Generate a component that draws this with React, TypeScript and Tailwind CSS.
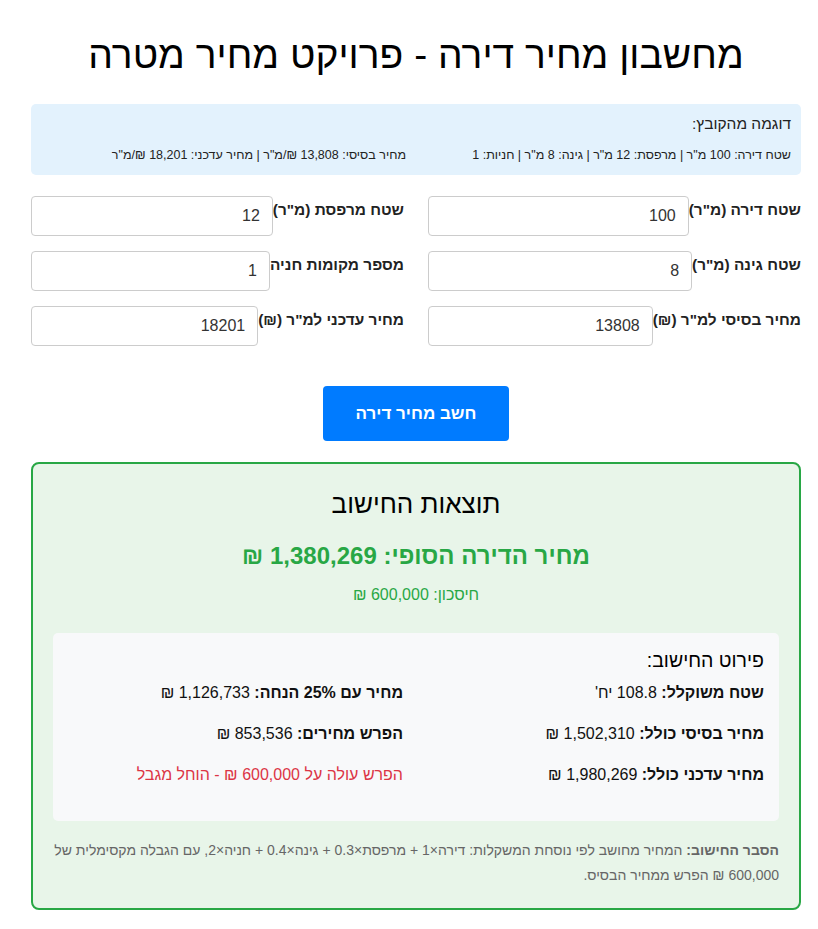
import React from "react";

const font = { fontFamily: '"Liberation Sans", Arial, sans-serif' };

function Field({ label, value }: { label: string; value: string }) {
  return (
    <div className="flex items-start">
      <label className="text-[15.4px] font-bold text-[#222] leading-[18px] pt-[5px] whitespace-nowrap">{label}</label>
      <input
        type="text"
        defaultValue={value}
        dir="rtl"
        className="flex-1 min-w-0 h-[40px] border border-[#ccc] rounded-[4px] bg-white px-[12px] text-[16px] text-[#333] text-right outline-none"
        style={font}
      />
    </div>
  );
}

function Item({ label, value, className = "" }: { label?: string; value: string; className?: string }) {
  return (
    <div className={`text-[16px] leading-[18px] text-[#111] ${className}`}>
      {label && <strong className="font-bold">{label} </strong>}
      {value}
    </div>
  );
}

export default function App() {
  return (
    <div dir="rtl" className="bg-white min-h-[929px] pl-[31px] pr-[17px]" style={font}>
      <div className="w-[770px]">
        <h1 className="text-center text-[39px] leading-[45px] font-normal text-black pt-[32px]">
          מחשבון מחיר דירה - פרויקט מחיר מטרה
        </h1>

        <div className="mt-[27px] bg-[#e3f2fd] rounded-[5px] px-[10px] pt-[11px] pb-[13px] text-[#222]">
          <div className="text-[15.5px] leading-[18px]">דוגמה מהקובץ:</div>
          <div className="mt-[15px] grid grid-cols-2 gap-x-[20px] text-[12.5px] leading-[14px]">
            <div>שטח דירה: 100 מ"ר | מרפסת: 12 מ"ר | גינה: 8 מ"ר | חניות: 1</div>
            <div>מחיר בסיסי: 13,808 ₪/מ"ר | מחיר עדכני: 18,201 ₪/מ"ר</div>
          </div>
        </div>

        <div className="mt-[21px] grid grid-cols-2 gap-x-[24px] gap-y-[15px]">
          <Field label={'שטח דירה (מ"ר)'} value="100" />
          <Field label={'שטח מרפסת (מ"ר)'} value="12" />
          <Field label={'שטח גינה (מ"ר)'} value="8" />
          <Field label="מספר מקומות חניה" value="1" />
          <Field label={'מחיר בסיסי למ"ר (₪)'} value="13808" />
          <Field label={'מחיר עדכני למ"ר (₪)'} value="18201" />
        </div>

        <div className="mt-[40px] flex justify-center">
          <button className="w-[186px] h-[55px] bg-[#007bff] text-white rounded-[4px] text-[17px] font-bold" style={font}>
            חשב מחיר דירה
          </button>
        </div>

        <div className="mt-[21px] border-2 border-[#28a745] rounded-[8px] bg-[#e8f5e9] p-[20px]">
          <h3 className="mt-[5px] text-center text-[26px] leading-[30px] text-black">תוצאות החישוב</h3>
          <div className="mt-[23px] text-center text-[24px] leading-[28px] font-bold text-[#28a745]">
            מחיר הדירה הסופי: 1,380,269 ₪
          </div>
          <div className="mt-[16px] text-center text-[16px] leading-[18px] text-[#28a745]">חיסכון: 600,000 ₪</div>

          <div className="mt-[29px] bg-[#f8f9fa] rounded-[5px] px-[15px] pt-[16px] pb-[37px]">
            <div className="text-[19.5px] leading-[22px] text-black">פירוט החישוב:</div>
            <div className="mt-[13px] grid grid-cols-2 gap-x-[26px] gap-y-[23px]">
              <Item label="שטח משוקלל:" value="108.8 יח'" />
              <Item label="מחיר עם 25% הנחה:" value="1,126,733 ₪" />
              <Item label="מחיר בסיסי כולל:" value="1,502,310 ₪" />
              <Item label="הפרש מחירים:" value="853,536 ₪" />
              <Item label="מחיר עדכני כולל:" value="1,980,269 ₪" />
              <Item value="הפרש עולה על 600,000 ₪ - הוחל מגבל" className="!text-[#dc3545]" />
            </div>
          </div>

          <p className="mt-[17px] text-[14px] leading-[25px] text-[#666]">
            <strong className="font-bold">הסבר החישוב:</strong> המחיר מחושב לפי נוסחת המשקלות: דירה×1 + מרפסת×0.3 + גינה×0.4 + חניה×2, עם הגבלה מקסימלית של 600,000 ₪ הפרש ממחיר הבסיס.
          </p>
        </div>
      </div>
    </div>
  );
}
